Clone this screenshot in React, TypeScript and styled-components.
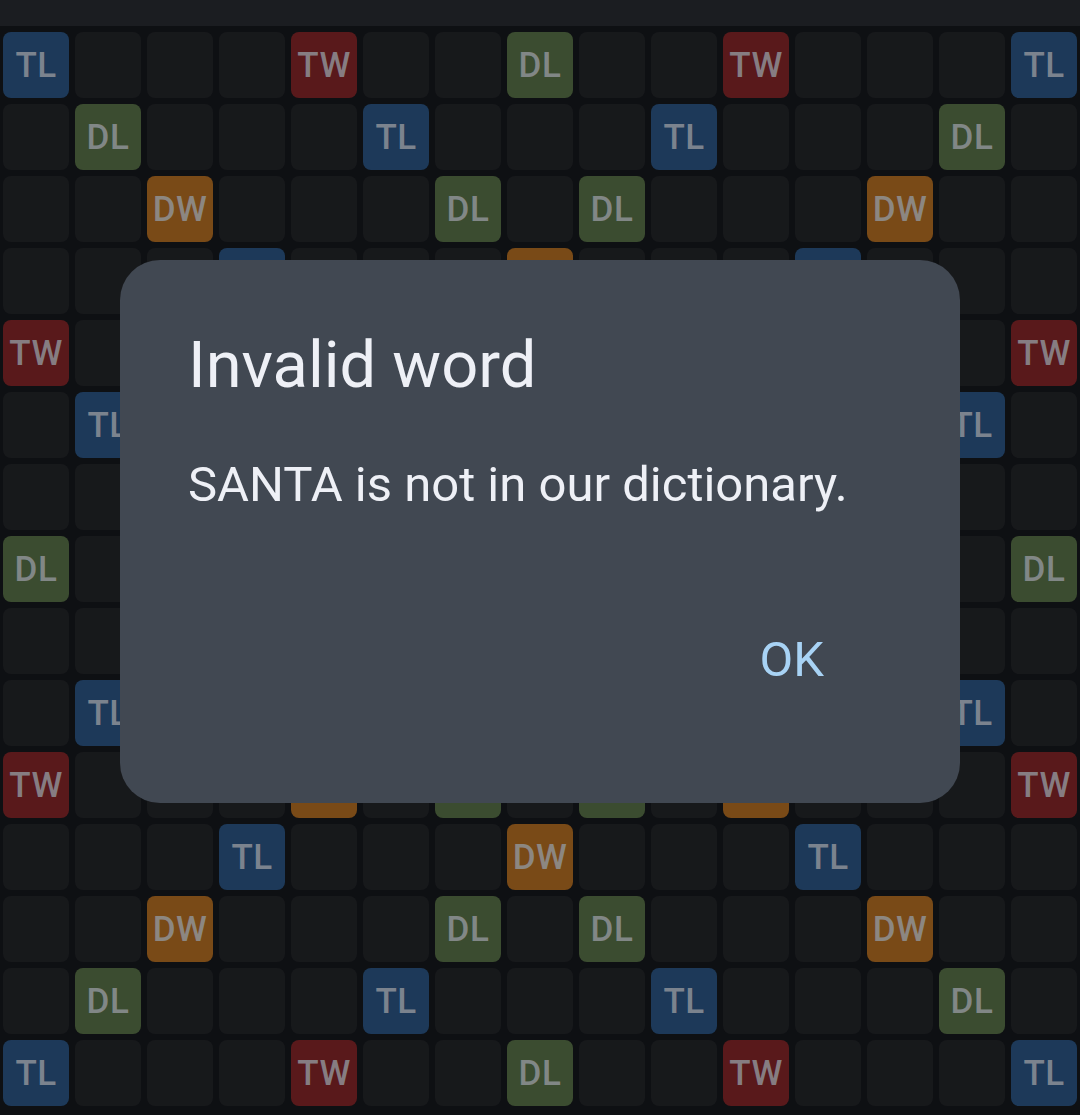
import React from "react";
import styled, { createGlobalStyle } from "styled-components";

type Bonus = "TL" | "DL" | "TW" | "DW" | null;

const GlobalStyle = createGlobalStyle`
  html, body {
    margin: 0;
    padding: 0;
    background: #15181c;
    font-family: Roboto, "Noto Sans", "Liberation Sans", sans-serif;
  }
  * { box-sizing: border-box; }
`;

const Page = styled.div`
  width: 1080px;
  height: 1115px;
  display: flex;
  flex-direction: column;
  background: #15181c;
  overflow: hidden;
`;

const TopBar = styled.header`
  height: 26px;
  flex: none;
  background: #292c32;
`;

const Board = styled.main`
  display: grid;
  grid-template-columns: repeat(15, 66px);
  grid-auto-rows: 66px;
  gap: 6px;
  padding: 6px 3px 9px 3px;
`;

const bonusColors: Record<string, string> = {
  TL: "#2b5584",
  DL: "#587147",
  DW: "#b36d22",
  TW: "#842629",
  none: "#232529",
};

const Square = styled.div<{ $kind: Bonus }>`
  border-radius: 8px;
  background: ${(p) => bonusColors[p.$kind ?? "none"]};
  display: flex;
  align-items: center;
  justify-content: center;
  color: rgba(214, 220, 228, 0.82);
  font-family: Roboto, "Noto Sans", sans-serif;
  font-size: 35px;
  font-weight: 500;
  letter-spacing: 0.5px;
`;

const Scrim = styled.div`
  position: fixed;
  inset: 0;
  background: rgba(0, 0, 0, 0.32);
  display: flex;
  justify-content: center;
  align-items: flex-start;
  padding-top: 260px;
`;

const Dialog = styled.div`
  width: 840px;
  background: #414852;
  border-radius: 40px;
  padding: 66px 68px 97px 68px;
  display: flex;
  flex-direction: column;
`;

const Title = styled.h2`
  margin: 0;
  font-size: 65px;
  line-height: 78px;
  font-weight: 400;
  color: #eef0f6;
`;

const Message = styled.p`
  margin: 51px 0 0 0;
  font-size: 49px;
  line-height: 60px;
  font-weight: 400;
  color: #eef0f6;
`;

const Actions = styled.div`
  margin-top: 99px;
  display: flex;
  justify-content: flex-end;
  padding-right: 34px;
`;

const TextButton = styled.button`
  border: none;
  background: transparent;
  padding: 16px 34px;
  font-family: Roboto, "Noto Sans", sans-serif;
  font-size: 49px;
  line-height: 60px;
  font-weight: 400;
  color: #a8d3f5;
  cursor: pointer;
`;

// Bonus layout for the 15x15 board; mirrored top/bottom and left/right.
const topHalf: Record<number, Record<number, Bonus>> = {
  0: { 0: "TL", 4: "TW", 7: "DL", 10: "TW", 14: "TL" },
  1: { 1: "DL", 5: "TL", 9: "TL", 13: "DL" },
  2: { 2: "DW", 6: "DL", 8: "DL", 12: "DW" },
  3: { 3: "TL", 7: "DW", 11: "TL" },
  4: { 0: "TW", 4: "DW", 6: "DL", 8: "DL", 10: "DW", 14: "TW" },
  5: { 1: "TL", 5: "TL", 9: "TL", 13: "TL" },
  6: { 2: "DL", 12: "DL" },
  7: { 0: "DL", 7: "DW", 14: "DL" },
};

function bonusAt(r: number, c: number): Bonus {
  const row = topHalf[r <= 7 ? r : 14 - r];
  return row[c] ?? null;
}

const cells = Array.from({ length: 225 }, (_, i) => {
  const r = Math.floor(i / 15);
  const c = i % 15;
  return { key: i, kind: bonusAt(r, c) };
});

export default function App() {
  return (
    <>
      <GlobalStyle />
      <Page>
        <TopBar />
        <Board>
          {cells.map((cell) => (
            <Square key={cell.key} $kind={cell.kind}>
              {cell.kind}
            </Square>
          ))}
        </Board>
      </Page>
      <Scrim>
        <Dialog role="alertdialog">
          <Title>Invalid word</Title>
          <Message>SANTA is not in our dictionary.</Message>
          <Actions>
            <TextButton>OK</TextButton>
          </Actions>
        </Dialog>
      </Scrim>
    </>
  );
}
